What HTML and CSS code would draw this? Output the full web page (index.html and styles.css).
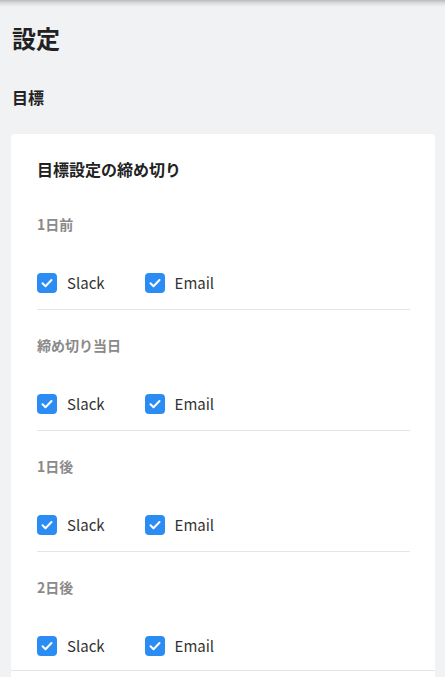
FILE: index.html
```html
<!DOCTYPE html>
<html lang="ja">
<head>
<meta charset="UTF-8">
<meta name="viewport" content="width=device-width, initial-scale=1.0">
<title>設定</title>
<link rel="stylesheet" href="styles.css">
</head>
<body>

<div class="topbar"></div>

<div class="page">
  <h1 class="page-title">設定</h1>
  <h2 class="group-title">目標</h2>

  <div class="card">
    <h3 class="card-title">目標設定の締め切り</h3>

    <div class="section">
      <div class="section-label">1日前</div>
      <div class="options">
        <label class="option"><span class="check"><svg viewBox="0 0 20 20"><path d="M5.5 10.2l3 3 6-6.2"/></svg></span>Slack</label>
        <label class="option"><span class="check"><svg viewBox="0 0 20 20"><path d="M5.5 10.2l3 3 6-6.2"/></svg></span>Email</label>
      </div>
    </div>

    <div class="section">
      <div class="section-label">締め切り当日</div>
      <div class="options">
        <label class="option"><span class="check"><svg viewBox="0 0 20 20"><path d="M5.5 10.2l3 3 6-6.2"/></svg></span>Slack</label>
        <label class="option"><span class="check"><svg viewBox="0 0 20 20"><path d="M5.5 10.2l3 3 6-6.2"/></svg></span>Email</label>
      </div>
    </div>

    <div class="section">
      <div class="section-label">1日後</div>
      <div class="options">
        <label class="option"><span class="check"><svg viewBox="0 0 20 20"><path d="M5.5 10.2l3 3 6-6.2"/></svg></span>Slack</label>
        <label class="option"><span class="check"><svg viewBox="0 0 20 20"><path d="M5.5 10.2l3 3 6-6.2"/></svg></span>Email</label>
      </div>
    </div>

    <div class="section section-last">
      <div class="section-label">2日後</div>
      <div class="options">
        <label class="option"><span class="check"><svg viewBox="0 0 20 20"><path d="M5.5 10.2l3 3 6-6.2"/></svg></span>Slack</label>
        <label class="option"><span class="check"><svg viewBox="0 0 20 20"><path d="M5.5 10.2l3 3 6-6.2"/></svg></span>Email</label>
      </div>
    </div>

    <div class="card-more"></div>
  </div>
</div>

</body>
</html>
```

FILE: styles.css
```css
body {
  margin: 0;
  background: #f1f2f4;
  font-family: "Noto Sans CJK JP", "Noto Sans", sans-serif;
  color: #222;
}
.topbar {
  height: 7px;
  background: linear-gradient(#b9babc, #d9dadc 40%, #f1f2f4);
}
.page {
  padding: 0 10px 0 11px;
}
.page-title {
  margin: 14px 0 0 1px;
  font-size: 24px;
  line-height: 34px;
  font-weight: 700;
}
.group-title {
  margin: 30px 0 0 1px;
  font-size: 16px;
  line-height: 24px;
  font-weight: 700;
}
.card {
  margin-top: 25px;
  background: #fff;
  border-radius: 4px 4px 0 0;
  padding-top: 23px;
}
.card-title {
  margin: 0 26px 9px;
  font-size: 16px;
  line-height: 24px;
  font-weight: 700;
  color: #222;
}
.section {
  margin: 0 25px 0 26px;
  padding: 23px 0 16px;
  border-bottom: 1px solid #e4e5ea;
}
.section + .section {
  padding-top: 24px;
}
.section-last {
  padding-bottom: 14px;
  border-bottom: none;
}
.section-label {
  font-size: 14px;
  line-height: 22px;
  font-weight: 700;
  color: #8a8a8a;
}
.options {
  display: flex;
  gap: 40px;
  margin-top: 38px;
  height: 20px;
}
.option {
  display: flex;
  align-items: center;
  gap: 10px;
  font-size: 15px;
  line-height: 20px;
  color: #333;
}
.check {
  width: 20px;
  height: 20px;
  border-radius: 4px;
  background: #2b8cf3;
  display: flex;
}
.check svg {
  width: 20px;
  height: 20px;
  fill: none;
  stroke: #fff;
  stroke-width: 2;
  stroke-linecap: round;
  stroke-linejoin: round;
}
.card-more {
  border-top: 1px solid #e4e5ea;
  height: 12px;
}
```
